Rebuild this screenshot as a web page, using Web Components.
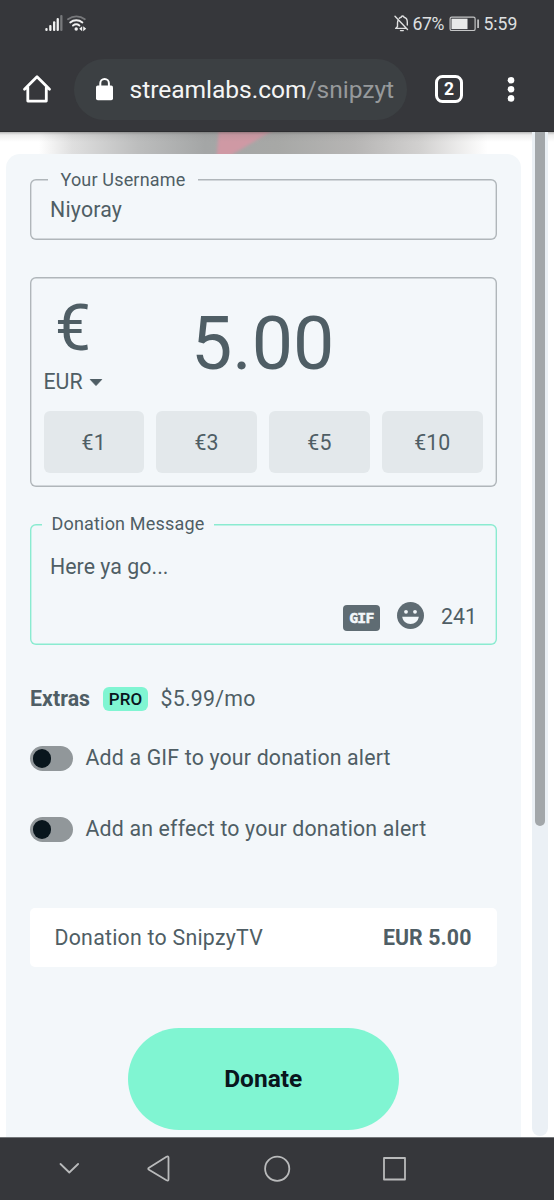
<!DOCTYPE html>
<html lang="en">
<head>
<meta charset="utf-8">
<title>Donate to SnipzyTV</title>
<style>
html,body{margin:0;height:100%;overflow:hidden;background:#fff}
body{font-family:Roboto,"Liberation Sans",sans-serif;color:#4f5e65}
</style>
</head>
<body>
<phone-screen>
  <status-bar></status-bar>
  <browser-bar></browser-bar>
  <donation-page>
    <outlined-field label="Your Username" style="--h:61px;--lx:18px;--lp:12.5px;--ls:.17px"><field-text style="--top:20.5px;--ls:.2px">Niyoray</field-text></outlined-field>
    <amount-box></amount-box>
    <outlined-field label="Donation Message" style="--h:121px;--lx:12px;--lp:9.5px;--line:#8aebd0;--ls:.18px;--lt:-13px">
      <field-text style="--top:33px;--ls:.05px">Here ya go...</field-text>
      <message-tools slot="tools"></message-tools>
    </outlined-field>
    <extras-title></extras-title>
    <toggle-row style="--mt:34px">Add a GIF to your donation alert</toggle-row>
    <toggle-row style="--mt:46px">Add an effect to your donation alert</toggle-row>
    <summary-row><span>Donation to SnipzyTV</span><b slot="total">EUR 5.00</b></summary-row>
    <donate-button>Donate</donate-button>
  </donation-page>
  <nav-bar></nav-bar>
</phone-screen>
<script>
const define = (name, html) => customElements.define(name, class extends HTMLElement {
  constructor() {
    super();
    this.attachShadow({mode: "open"}).innerHTML = "<style>*{box-sizing:border-box}svg{display:block;flex:none}:host{box-sizing:border-box}</style>" + html;
    const label = this.shadowRoot.querySelector("[data-label]");
    if (label) label.textContent = this.getAttribute("label");
  }
});

define("phone-screen", `<style>:host{display:flex;flex-direction:column;width:554px;height:1200px;overflow:hidden}</style><slot></slot>`);

define("status-bar", `<style>
:host{display:flex;align-items:center;justify-content:space-between;height:47px;flex:none;background:#36373b;color:#dfe0e1;padding:1px 36.5px 0 44px;font-size:17.6px}
div{display:flex;align-items:center}
</style>
<div>
<svg width="44" height="20" viewBox="44 14 44 20">
<g fill="#f1f1f1"><rect x="45.3" y="28" width="2.3" height="3" rx="1"/><rect x="49.2" y="25" width="2.3" height="6" rx="1"/><rect x="53" y="21.3" width="2.3" height="9.7" rx="1"/><rect x="56.6" y="18" width="2.3" height="13" rx="1"/></g>
<rect x="60.2" y="15" width="2.3" height="16" rx="1" fill="#77787b"/>
<g fill="none" stroke-width="1.9" stroke-linecap="round"><path d="M68 19.2a14 14 0 0 1 16.8 0" stroke="#77787b"/><path d="M70.2 22.5a9.4 9.4 0 0 1 12.2 0M73 25.6a5.2 5.2 0 0 1 6.4 0" stroke="#f1f1f1"/></g>
<circle cx="76.2" cy="29" r="1.7" fill="#f1f1f1"/><path d="M82.2 26.2v5l-3-2.5zM83.2 26.2v5l3-2.5z" fill="#f1f1f1"/>
</svg></div>
<div>
<svg width="18" height="20" viewBox="393 14 18 20" fill="none" stroke="#dfe0e1" stroke-width="1.4" stroke-linecap="round" stroke-linejoin="round"><path d="M396 16.3 408.5 29.5M399.4 19.7c-.7 1-.9 2-.9 3.3v3.5l-1.8 1.9h10M400.3 18.2c.6-.5 1.1-.7 1.9-.9.1-1.7 2.7-1.7 2.8 0 2.2.5 3.3 2.3 3.3 4.8v3"/><path d="M401.5 30.6h2.8"/></svg>
<span style="margin-left:2px;width:35.5px;letter-spacing:-.35px">67%</span>
<svg width="31" height="18" viewBox="448.500 14.500 31 18"><rect x="450.6" y="16.7" width="25" height="13.3" rx="1.6" fill="none" stroke="#c4c5c6" stroke-width="1.2"/><rect x="452" y="18.2" width="16" height="10.4" fill="#e8e9e9"/><path d="M478.6 19v8.5" stroke="#c4c5c6" stroke-width="1.7"/></svg>
<span style="margin-left:4.5px;letter-spacing:.05px">5:59</span>
</div>`);

define("browser-bar", `<style>
:host{display:flex;align-items:center;height:85px;flex:none;background:#36373b;padding:0 0 0 22px;border-bottom:1px solid #2c2d30}
.pill{display:flex;align-items:center;margin-left:22px;width:332.5px;height:61px;border-radius:31px;background:#3c4043;padding:0 9px 0 20px}
.url{margin:2px 0 0 14.500px;flex:1;overflow:hidden;white-space:nowrap;font-size:24.6px;color:#f4f5f5;line-height:36px;letter-spacing:-.05px}
.url i{font-style:normal;color:#96999b}
.tab{display:flex;align-items:center;justify-content:center;width:28px;height:28px;margin-left:28.5px;border:3px solid #fff;border-radius:7.500px;color:#fff;font-weight:700;font-size:17.5px}
.dots{margin-left:41px}
</style>
<svg width="30" height="30" viewBox="22 74.500 30 30" fill="none" stroke="#fff" stroke-width="2.8" stroke-linejoin="round" stroke-linecap="round"><path d="M24.5 89.8 37 77.3l12.5 12.5M27.8 88v13.6h18.5V88"/></svg>
<div class="pill"><svg width="21" height="26" viewBox="94 75.500 21 26"><rect x="96" y="85" width="17" height="14.7" rx="1.8" fill="#fff"/><path d="M100.3 86v-3.2a4.3 4.3 0 0 1 8.6 0V86" fill="none" stroke="#fff" stroke-width="2"/></svg>
<div class="url">streamlabs.com<i>/snipzyt</i></div></div>
<div class="tab">2</div>
<svg class="dots" width="14" height="28" viewBox="504 75 14 28" fill="#fff"><circle cx="511" cy="80.200" r="3.300"/><circle cx="511" cy="89.300" r="3.300"/><circle cx="511" cy="98.400" r="3.300"/></svg>`);

define("donation-page", `<style>
:host{display:flex;position:relative;flex:none;height:1005px;padding-left:6px;background:#fff}
.hero{position:absolute;left:0;top:0}
.card{position:relative;width:515px;margin-top:22px;height:983px;padding:25px 24.500px 0 24px;background:#f3f7fa;border-radius:14px 14px 0 0;display:flex;flex-direction:column}
.track{margin-left:11px;width:16px;height:1004px;background:#ebf0f5;border-radius:0 0 8px 8px;display:flex;justify-content:center;position:relative}
.thumb{width:9.500px;height:694px;background:#a3a7aa;border-radius:0 0 5px 5px}
</style>
<svg class="hero" width="554" height="30" viewBox="0 0 554 30"><defs><linearGradient id="g" gradientUnits="userSpaceOnUse" x1="0" x2="554" y1="0" y2="0"><stop offset=".07" stop-color="#fff"/><stop offset=".13" stop-color="#dfdfdf"/><stop offset=".25" stop-color="#bcbdbd"/><stop offset=".37" stop-color="#a4a6a6"/><stop offset=".5" stop-color="#a7a8a6"/><stop offset=".64" stop-color="#b6b5b4"/><stop offset=".76" stop-color="#d2d1d0"/><stop offset=".88" stop-color="#fff"/></linearGradient><linearGradient id="s" x2="0" y2="1"><stop stop-color="#444" stop-opacity=".4"/><stop offset=".3" stop-color="#777" stop-opacity=".13"/><stop offset="1" stop-color="#888" stop-opacity="0"/></linearGradient><filter id="b"><feGaussianBlur stdDeviation="1.500"/></filter></defs><rect width="554" height="30" fill="url(#g)"/><path d="M219-4h58L216 32z" fill="#cf99a4" filter="url(#b)"/><rect width="554" height="10" fill="url(#s)"/></svg>
<div class="card"><slot></slot></div><div class="track"><div class="thumb"></div></div>`);

define("outlined-field", `<style>
:host{display:flex;flex-direction:column;position:relative;flex:none;height:var(--h);box-shadow:inset 0 0 0 1.400px var(--line,#b0b6ba);border-radius:6px;padding:0 20px}
label{position:absolute;left:var(--lx);top:calc(var(--lt,-12px) + 1px);line-height:24px;padding:0 var(--lp);background:#f3f7fa;font-size:18px;letter-spacing:var(--ls);white-space:nowrap}
</style><label data-label></label><slot></slot><slot name="tools"></slot>`);

define("field-text", `<style>:host{display:block;margin-top:calc(var(--top) - 1px);line-height:22px;font-size:21.3px;letter-spacing:var(--ls)}</style><slot></slot>`);

define("amount-box", `<style>
:host{display:flex;flex-direction:column;flex:none;height:210px;margin:37px 0;box-shadow:inset 0 0 0 1.400px #b0b6ba;border-radius:6px;padding:1px 14px 14px 13.5px}
.top{display:flex;height:133px}
.cur{width:90px;display:flex;flex-direction:column}
.sym{font-size:64px;line-height:70px;margin:15.500px 0 0 11.5px}
.code{display:flex;align-items:center;font-size:21.3px;line-height:24px;margin-top:6.500px;gap:6px}
.val{font-size:73.500px;line-height:80px;margin:26px 0 0 57.500px}
.quick{display:grid;grid-template-columns:repeat(4,1fr);gap:12.5px;height:61.5px}
.quick span{display:flex;align-items:center;justify-content:center;background:#e3e8eb;border-radius:6px;font-size:21.3px;letter-spacing:.1px;padding-top:1px}
</style>
<div class="top"><div class="cur"><div class="sym">€</div><div class="code">EUR<svg width="14" height="9" viewBox="0 0 14 9"><path d="M1.300 1.500h11.400L7 7.500z" fill="#4f5e65" stroke="#4f5e65" stroke-linejoin="round"/></svg></div></div><div class="val">5.00</div></div>
<div class="quick"><span>€1</span><span>€3</span><span>€5</span><span>€10</span></div>`);

define("message-tools", `<style>
:host{display:flex;align-items:center;justify-content:flex-end;margin:24px -.7px 0 0;height:28px;font-size:21.3px;letter-spacing:.1px}
.gif{display:flex;align-items:center;justify-content:center;width:37px;height:26px;margin-top:3px;background:#5f6c73;border-radius:4px;color:#f3f7fa;font-family:"DejaVu Sans Mono",monospace;font-weight:700;font-size:14.800px;letter-spacing:-.7px;-webkit-text-stroke:.5px #f3f7fa}
</style><span class="gif">GIF</span><svg style="margin:-1px 17px 0" width="27" height="27" viewBox="0 0 27 27"><circle cx="13.500" cy="13.500" r="13.500" fill="#5f6c73"/><g fill="#f3f7fa"><circle cx="9" cy="9.800" r="1.900"/><circle cx="18" cy="9.800" r="1.900"/><path d="M5.200 14.800h16.600c-.6 4.300-4 7.200-8.300 7.200s-7.700-2.900-8.300-7.200z"/></g></svg>241`);

define("extras-title", `<style>
:host{display:flex;align-items:center;margin-top:41px;height:26px;flex:none;font-size:21.3px}
b{letter-spacing:.05px;width:60px}
b,span{margin-top:-2px}
i{font-style:normal;display:flex;align-items:center;justify-content:center;width:45px;height:24.500px;margin:0 12.500px 0 13px;border-radius:6px;background:#80f5d2;color:#09161d;font-size:17px;font-weight:500;letter-spacing:.1px}
</style><b>Extras</b><i>PRO</i><span style="letter-spacing:.25px">$5.99/mo</span>`);

define("toggle-row", `<style>
:host{display:flex;align-items:center;flex:none;height:25px;margin-top:var(--mt);font-size:21.3px;letter-spacing:.18px;white-space:nowrap}
i{width:43px;height:24.500px;border-radius:13px;background:#91979a;margin-right:12.500px;padding:3px 2.500px;flex:none}
i::after{content:"";display:block;width:18.600px;height:18.600px;border-radius:50%;background:#09161d}
span{margin-top:-2px}
</style><i></i><span><slot></slot></span>`);

define("summary-row", `<style>
:host{display:flex;align-items:center;justify-content:space-between;flex:none;height:59px;margin-top:66px;padding:0 25px 0 24.500px;background:#fff;border-radius:5px;font-size:21.3px;letter-spacing:.25px}
::slotted(b){letter-spacing:.1px}
</style><slot></slot><slot name="total"></slot>`);

define("donate-button", `<style>
:host{display:flex;align-items:center;justify-content:center;align-self:center;flex:none;width:270.500px;height:101.500px;margin-top:61px;border-radius:51px;background:#80f5d2;color:#09161d;font-size:24.500px;font-weight:700}
</style><slot></slot>`);

define("nav-bar", `<style>:host{display:block;height:63px;flex:none;background:#36373b;border-top:1px solid #737679}</style>
<svg width="554" height="62" viewBox="0 1138 554 62" fill="none" stroke="#b9babb" stroke-width="1.800" stroke-linejoin="round" stroke-linecap="round"><path d="M60.500 1164l8.800 8.500 8.800-8.500M166.500 1156.700 149 1167.700q-1.500 1 0 2l17.500 10.600q2 1 2-1v-21.600q0-2-2-1z"/><circle cx="277.200" cy="1168.700" r="12.100"/><rect x="384" y="1158" width="21" height="21.500"/></svg>`);
</script>
</body>
</html>
